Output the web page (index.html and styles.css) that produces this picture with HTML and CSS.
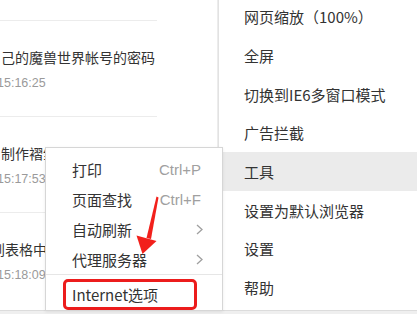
FILE: index.html
```html
<!DOCTYPE html>
<html lang="zh-CN">
<head>
<meta charset="utf-8">
<title>菜单</title>
<link rel="stylesheet" href="styles.css">
</head>
<body>
<div class="page">
  <div class="list-panel">
    <div class="sep first"></div>
    <div class="item">
      <div class="title">己的魔兽世界帐号的密码</div>
      <div class="time">15:16:25</div>
    </div>
    <div class="sep"></div>
    <div class="item">
      <div class="title">制作褶皱纹效果图片</div>
      <div class="time">15:17:53</div>
    </div>
    <div class="sep"></div>
    <div class="item">
      <div class="title shift">到表格中</div>
      <div class="time">15:18:09</div>
    </div>
  </div>
  <div class="main-menu">
    <div class="mm-item">网页缩放（100%）</div>
    <div class="mm-item">全屏</div>
    <div class="mm-item">切换到IE6多窗口模式</div>
    <div class="mm-item">广告拦截</div>
    <div class="mm-item active">工具</div>
    <div class="mm-item">设置为默认浏览器</div>
    <div class="mm-item">设置</div>
    <div class="mm-item">帮助</div>
  </div>
  <div class="bottom-strip"></div>

  <div class="sub-menu">
    <div class="sm-item"><span>打印</span><span class="key">Ctrl+P</span></div>
    <div class="sm-item"><span>页面查找</span><span class="key">Ctrl+F</span></div>
    <div class="sm-item"><span>自动刷新</span>
      <svg class="chev" width="7" height="11" viewBox="0 0 7 11"><polyline points="1,1 6,5.5 1,10" fill="none" stroke="#a0a0a0" stroke-width="1.3"/></svg>
    </div>
    <div class="sm-item"><span>代理服务器</span>
      <svg class="chev" width="7" height="11" viewBox="0 0 7 11"><polyline points="1,1 6,5.5 1,10" fill="none" stroke="#a0a0a0" stroke-width="1.3"/></svg>
    </div>
    <div class="sm-sep"></div>
    <div class="sm-option"><span class="red-box">Internet选项</span></div>
  </div>

  <svg class="arrow" width="417" height="314" viewBox="0 0 417 314">
    <polygon points="156.5,196.5 158.5,197.5 151,239 146.5,238" fill="#f2201b"/>
    <polygon points="136.5,235.5 156.5,241 142.5,254" fill="#f2201b"/>
  </svg>
</div>
</body>
</html>
```

FILE: styles.css
```css
* { box-sizing: border-box; }
html, body { margin: 0; padding: 0; }
body {
  width: 417px;
  height: 314px;
  overflow: hidden;
  background: #fff;
  font-family: "Noto Sans CJK SC", "Noto Sans", sans-serif;
  color: #333;
}
.page {
  position: relative;
  width: 417px;
  height: 314px;
  display: grid;
  grid-template-columns: 218px 1fr;
  grid-template-rows: 310px 4px;
  overflow: hidden;
}
.list-panel {
  border-right: 1px solid #ececec;
  overflow: hidden;
  background: #fff;
}
.sep {
  width: 157px;
  height: 1px;
  background: #ececec;
}
.sep.first { margin-top: 20px; }
.item {
  height: 95px;
  padding-top: 26px;
}
.title {
  font-size: 14px;
  line-height: 20px;
  white-space: nowrap;
  color: #333;
  padding-left: 1px;
}
.title.shift { margin-left: -9px; padding-left: 0; }
.time {
  margin-top: 7px;
  margin-left: -3px;
  font-family: "Liberation Sans", "Noto Sans", sans-serif;
  font-size: 12.5px;
  line-height: 18px;
  color: #9a9a9a;
  white-space: nowrap;
}
.main-menu {
  border-left: 1px solid #e2e2e2;
  background: #fff;
  margin-top: -2.5px;
}
.mm-item {
  height: 38.7px;
  display: flex;
  align-items: center;
  padding-left: 25px;
  font-size: 15px;
  color: #333;
  white-space: nowrap;
}
.mm-item.active { background: #ebebeb; }
.bottom-strip {
  grid-column: 1 / 3;
  background: #efefef;
  border-top: 1px solid #dcdcdc;
}
.sub-menu {
  position: absolute;
  left: 45px;
  top: 147px;
  width: 178px;
  height: 164px;
  background: #fff;
  border: 1px solid #d6d6d6;
  box-shadow: 0 1px 3px rgba(0,0,0,0.08);
  padding-top: 6px;
}
.sm-item {
  height: 30px;
  display: flex;
  align-items: center;
  justify-content: space-between;
  padding-left: 26px;
  padding-right: 19px;
  font-size: 15px;
  color: #333;
}
.sm-item .key {
  font-family: "Liberation Sans", "Noto Sans", sans-serif;
  font-size: 15px;
  color: #a0a0a0;
  margin-right: 2px;
}
.sm-sep {
  height: 1px;
  background: #e6e6e6;
}
.sm-option {
  padding-left: 17px;
  padding-top: 4px;
}
.red-box {
  display: flex;
  align-items: center;
  width: 134px;
  height: 31px;
  border: 3px solid #ec1c1c;
  border-radius: 5px;
  padding-left: 6px;
  font-size: 15px;
  color: #333;
}
.arrow {
  position: absolute;
  left: 0;
  top: 0;
  pointer-events: none;
}
```
